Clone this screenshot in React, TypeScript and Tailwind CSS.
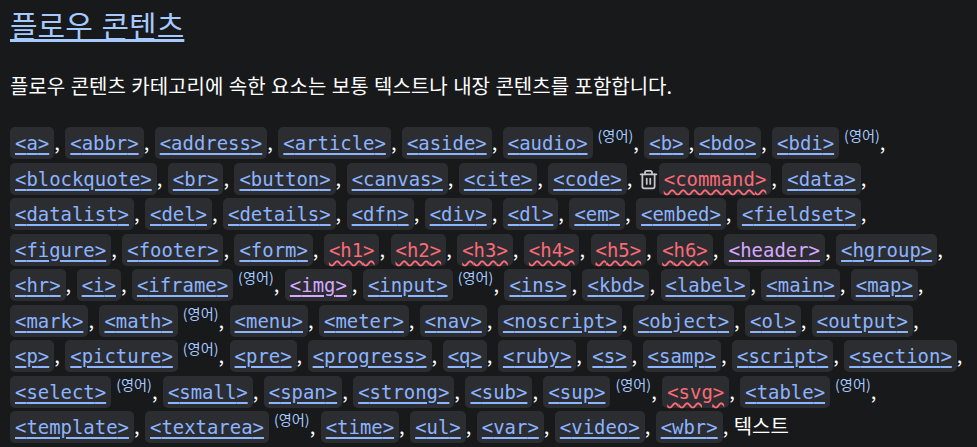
import { Trash2 } from "lucide-react";

type Item = { tag: string; kind?: "bad" | "visited"; en?: boolean; trash?: boolean; tight?: boolean };

const items: Item[] = [
  { tag: "a" }, { tag: "abbr" }, { tag: "address" }, { tag: "article" }, { tag: "aside" },
  { tag: "audio", en: true }, { tag: "b", tight: true }, { tag: "bdo" }, { tag: "bdi", en: true },
  { tag: "blockquote" }, { tag: "br" }, { tag: "button" }, { tag: "canvas" }, { tag: "cite" }, { tag: "code" },
  { tag: "command", kind: "bad", trash: true }, { tag: "data" },
  { tag: "datalist" }, { tag: "del" }, { tag: "details" }, { tag: "dfn" }, { tag: "div" }, { tag: "dl" },
  { tag: "em" }, { tag: "embed" }, { tag: "fieldset" },
  { tag: "figure" }, { tag: "footer" }, { tag: "form" }, { tag: "h1", kind: "bad" }, { tag: "h2", kind: "bad" },
  { tag: "h3", kind: "bad" }, { tag: "h4", kind: "bad" }, { tag: "h5", kind: "bad" }, { tag: "h6", kind: "bad" },
  { tag: "header", kind: "visited" }, { tag: "hgroup" },
  { tag: "hr" }, { tag: "i" }, { tag: "iframe", en: true }, { tag: "img", kind: "visited" }, { tag: "input", en: true },
  { tag: "ins" }, { tag: "kbd" }, { tag: "label" }, { tag: "main" }, { tag: "map" },
  { tag: "mark" }, { tag: "math", en: true }, { tag: "menu" }, { tag: "meter" }, { tag: "nav" }, { tag: "noscript" },
  { tag: "object" }, { tag: "ol" }, { tag: "output" },
  { tag: "p" }, { tag: "picture", en: true }, { tag: "pre" }, { tag: "progress" }, { tag: "q" }, { tag: "ruby" },
  { tag: "s" }, { tag: "samp" }, { tag: "script" }, { tag: "section" },
  { tag: "select", en: true }, { tag: "small" }, { tag: "span" }, { tag: "strong" }, { tag: "sub" },
  { tag: "sup", en: true }, { tag: "svg", kind: "bad" }, { tag: "table", en: true },
  { tag: "template" }, { tag: "textarea", en: true }, { tag: "time" }, { tag: "ul" }, { tag: "var" }, { tag: "video" }, { tag: "wbr" },
];

function Tag({ item }: { item: Item }) {
  const color =
    item.kind === "bad"
      ? "text-[#fb6a76] decoration-wavy decoration-2 decoration-[#fb6a76]"
      : item.kind === "visited"
        ? "text-[#d6a8ff] decoration-[1.5px]"
        : "text-[#8cb4ff] decoration-[1.5px]";
  return (
    <a className={`rounded-[5px] bg-[#2b2d31] px-[5px] py-[5px] font-['DejaVu_Sans_Mono',monospace] text-[18.93px] leading-none underline underline-offset-[3px] ${color}`}>
      &lt;{item.tag}&gt;
    </a>
  );
}

export default function App() {
  return (
    <div className="h-[447px] w-[977px] overflow-hidden bg-[#18191b] px-[10px] font-['Noto_Sans_CJK_KR',sans-serif] text-[20px] text-white [word-spacing:1px]">
      <h2 className="pt-[4px] text-[30px] leading-[40px] text-[#a6c9ff] underline [word-spacing:2px]">플로우 콘텐츠</h2>
      <p className="mt-[28px] leading-[28px]">플로우 콘텐츠 카테고리에 속한 요소는 보통 텍스트나 내장 콘텐츠를 포함합니다.</p>
      <p className="mt-[24px] w-[962px] leading-[35.5px]">
        {items.map((item, i) => (
          <span key={item.tag}>
            {item.trash && <Trash2 className="inline h-[21px] w-[21px] align-[-4px] text-[#c4c7cc]" />}
            <Tag item={item} />
            {item.en && <sup className="top-[-9px] ml-[5px] text-[14.2px] leading-none text-[#a6c9ff]">(영어)</sup>}
            {i < items.length - 1 && (item.tight ? "," : ", ")}
          </span>
        ))}
        , <span>텍스트</span>
      </p>
    </div>
  );
}
